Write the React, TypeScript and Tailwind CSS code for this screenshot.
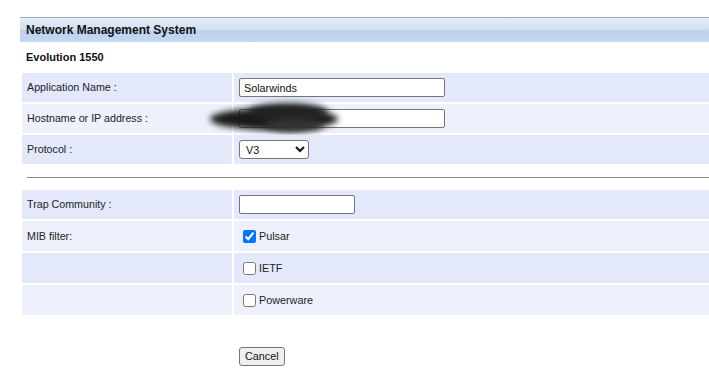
import React from "react";

const dark = "bg-[#e3e9fb]";
const light = "bg-[#eef1fc]";

function Row({
  bg,
  h,
  label,
  children,
}: {
  bg: string;
  h: string;
  label?: string;
  children?: React.ReactNode;
}) {
  return (
    <div className={`grid grid-cols-[210px_1fr] gap-x-[2px] ${h}`}>
      <div className={`${bg} flex items-center pl-[5px]`}>{label}</div>
      <div className={`${bg} relative flex items-center pl-[5px]`}>{children}</div>
    </div>
  );
}

function Check({ label, checked }: { label: string; checked?: boolean }) {
  return (
    <label className="flex items-center text-[10.8px] text-[#222]">
      <input
        type="checkbox"
        defaultChecked={checked}
        className="m-0 ml-[4px] mr-[3px] h-[13px] w-[13px] accent-[#0075ff]"
      />
      {label}
    </label>
  );
}

export default function App() {
  return (
    <div className="min-h-[386px] w-[709px] overflow-hidden bg-white pt-[17px] font-['Liberation_Sans',Arial,sans-serif] text-[10.7px] text-[#222]">
      <div className="ml-[20px] flex h-[25px] items-center border-t border-[#9eacb8] bg-[linear-gradient(to_bottom,#e4edf9_0%,#d3e1f4_45%,#bcd1ef_55%,#c5d8f2_100%)] pl-[6px] text-[12px] font-bold text-[#111]">
        Network Management System
      </div>
      <div className="ml-[22px] flex h-[31px] items-center pl-[4px] text-[11px] font-bold text-[#111]">
        Evolution 1550
      </div>
      <div className="ml-[22px] flex flex-col gap-[2px]">
        <Row bg={dark} h="h-[29px]" label="Application Name :">
          <input
            defaultValue="Solarwinds"
            className="h-[19px] w-[206px] rounded-[2px] border border-[#767676] bg-white px-[4px] text-[10.8px] text-[#111] outline-none"
          />
        </Row>
        <Row bg={light} h="h-[29px]" label="Hostname or IP address :">
          <input className="h-[19px] w-[206px] rounded-[2px] border border-[#767676] bg-white px-[4px] text-[10.8px] outline-none" />
          <div className="pointer-events-none absolute left-[-24px] top-[4px] h-[22px] w-[128px] rounded-[50%] bg-[#1a1a1a] blur-[3px]" />
          <div className="pointer-events-none absolute left-[14px] top-[-1px] h-[18px] w-[80px] rounded-[50%] bg-[#222] blur-[3px]" />
          <div className="pointer-events-none absolute left-[30px] top-[14px] h-[14px] w-[60px] rounded-[50%] bg-[#333] blur-[3px]" />
        </Row>
        <Row bg={dark} h="h-[29px]" label="Protocol :">
          <select
            defaultValue="V3"
            className="h-[19px] w-[70px] rounded-[3px] border border-[#767676] bg-white pl-[2px] text-[10.8px] text-[#111] outline-none"
          >
            <option>V1</option>
            <option>V2c</option>
            <option>V3</option>
          </select>
        </Row>
      </div>
      <div className="ml-[27px] mt-[13px] border-t border-[#8a8a8a]" />
      <div className="ml-[22px] mt-[12px] flex flex-col gap-[2px]">
        <Row bg={dark} h="h-[29px]" label="Trap Community :">
          <input className="h-[19px] w-[116px] rounded-[2px] border border-[#767676] bg-white px-[4px] text-[10.8px] outline-none" />
        </Row>
        <Row bg={light} h="h-[30px]" label="MIB filter:">
          <Check label="Pulsar" checked />
        </Row>
        <Row bg={dark} h="h-[30px]">
          <Check label="IETF" />
        </Row>
        <Row bg={light} h="h-[30px]">
          <Check label="Powerware" />
        </Row>
      </div>
      <div className="ml-[239px] mt-[32px]">
        <button className="h-[19px] rounded-[3px] border border-[#767676] bg-[#efefef] px-[5px] text-[10.8px] text-[#111]">
          Cancel
        </button>
      </div>
    </div>
  );
}
